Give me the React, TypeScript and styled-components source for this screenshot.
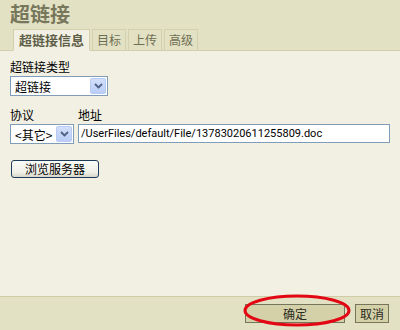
import React from "react";
import styled, { createGlobalStyle } from "styled-components";

const Global = createGlobalStyle`
  html, body { margin: 0; padding: 0; }
  body { width: 400px; height: 330px; overflow: hidden; font-family: "Noto Sans CJK SC", "Liberation Sans", sans-serif; }
  * { box-sizing: border-box; }
`;

const Dialog = styled.div`
  position: relative;
  width: 400px;
  height: 330px;
  display: flex;
  flex-direction: column;
  background: #f1f0e3;
`;

const Header = styled.div`
  height: 51px;
  background: #e3e1c4;
  border-bottom: 1px solid #d2cfae;
  display: flex;
  flex-direction: column;
  justify-content: space-between;
`;

const Title = styled.div`
  padding: 2px 0 0 10px;
  height: 28px;
  font-size: 20px;
  font-weight: bold;
  line-height: 24px;
  color: #77775c;
`;

const Tabs = styled.div`
  display: flex;
  gap: 2px;
  padding-left: 13px;
  height: 22px;
  margin-bottom: -1px;
`;

const Tab = styled.div<{ $active?: boolean }>`
  height: 22px;
  padding: 0 ${(p) => (p.$active ? "5px" : "4px")};
  border: 1px solid #d3d1ad;
  border-bottom: ${(p) => (p.$active ? "1px solid #f1f0e3" : "1px solid #d2cfae")};
  background: ${(p) => (p.$active ? "#f1f0e3" : "#e3e1c4")};
  color: ${(p) => (p.$active ? "#5f5f48" : "#6e6e53")};
  font-size: ${(p) => (p.$active ? "13px" : "12px")};
  font-weight: ${(p) => (p.$active ? "bold" : "normal")};
  line-height: 20px;
`;

const Body = styled.div`
  flex: 1;
  padding: 9px 10px 0 10px;
  display: flex;
  flex-direction: column;
`;

const Label = styled.div`
  font-size: 12px;
  line-height: 14px;
  color: #000;
`;

const Select = styled.div<{ $w: number }>`
  width: ${(p) => p.$w}px;
  height: 20px;
  border: 1px solid #7f9db9;
  background: #fff;
  display: flex;
  align-items: center;
  justify-content: space-between;
  padding: 0 1px 0 4px;
  font-size: 12px;
  color: #000;
`;

const ArrowBtn = styled.div`
  width: 16px;
  height: 16px;
  border: 1px solid #b8cbf2;
  border-radius: 2px;
  background: linear-gradient(#d3dffb, #b9cdf6);
  display: flex;
  align-items: center;
  justify-content: center;
`;

const Row = styled.div`
  display: flex;
  gap: 4px;
  margin-top: 12px;
`;

const Field = styled.div<{ $grow?: boolean }>`
  display: flex;
  flex-direction: column;
  gap: 2px;
  flex: ${(p) => (p.$grow ? 1 : "none")};
`;

const Input = styled.div`
  height: 19px;
  border: 1px solid #7f9db9;
  background: #fff;
  font-family: Roboto, "Liberation Sans", Arial, sans-serif;
  font-size: 11px;
  line-height: 17px;
  padding-left: 2px;
  color: #000;
  white-space: nowrap;
  overflow: hidden;
`;

const Browse = styled.div`
  margin-top: 16px;
  margin-left: 1px;
  width: 88px;
  height: 18px;
  border: 1px solid #1d3b5a;
  border-radius: 3px;
  background: linear-gradient(#fbfbf8, #f0f0e8 70%, #d8d6c8);
  font-size: 12px;
  line-height: 16px;
  text-align: center;
  color: #000;
`;

const Footer = styled.div`
  height: 34px;
  background: #e3e1c4;
  border-top: 1px solid #cfcca6;
  display: flex;
  justify-content: flex-end;
  gap: 10px;
  padding: 7px 11px 0 0;
`;

const FootBtn = styled.div<{ $w: number }>`
  width: ${(p) => p.$w}px;
  height: 19px;
  border: 1px solid #75755b;
  background: #d4d1a8;
  font-size: 12px;
  line-height: 17px;
  text-align: center;
  color: #2a2a1e;
`;

const Annotation = styled.svg`
  position: absolute;
  left: 243px;
  top: 294px;
  pointer-events: none;
`;

const Chevron = () => (
  <svg width="9" height="6" viewBox="0 0 9 6">
    <path d="M1 1 L4.5 4.5 L8 1" fill="none" stroke="#4d6185" strokeWidth="1.8" />
  </svg>
);

export default function App() {
  return (
    <>
      <Global />
      <Dialog>
        <Header>
          <Title>超链接</Title>
          <Tabs>
            <Tab $active>超链接信息</Tab>
            <Tab>目标</Tab>
            <Tab>上传</Tab>
            <Tab>高级</Tab>
          </Tabs>
        </Header>
        <Body>
          <Field>
            <Label>超链接类型</Label>
            <Select $w={98}>
              <span>超链接</span>
              <ArrowBtn><Chevron /></ArrowBtn>
            </Select>
          </Field>
          <Row>
            <Field>
              <Label>协议</Label>
              <Select $w={64}>
                <span>&lt;其它&gt;</span>
                <ArrowBtn><Chevron /></ArrowBtn>
              </Select>
            </Field>
            <Field $grow>
              <Label>地址</Label>
              <Input>/UserFiles/default/File/13783020611255809.doc</Input>
            </Field>
          </Row>
          <div>
            <Browse>浏览服务器</Browse>
          </div>
        </Body>
        <Footer>
          <FootBtn $w={100}>确定</FootBtn>
          <FootBtn $w={34}>取消</FootBtn>
        </Footer>
        <Annotation width="110" height="33" viewBox="0 0 110 33">
          <ellipse cx="54" cy="16.5" rx="52" ry="14.5" fill="none" stroke="#e30613" strokeWidth="3" />
        </Annotation>
      </Dialog>
    </>
  );
}
